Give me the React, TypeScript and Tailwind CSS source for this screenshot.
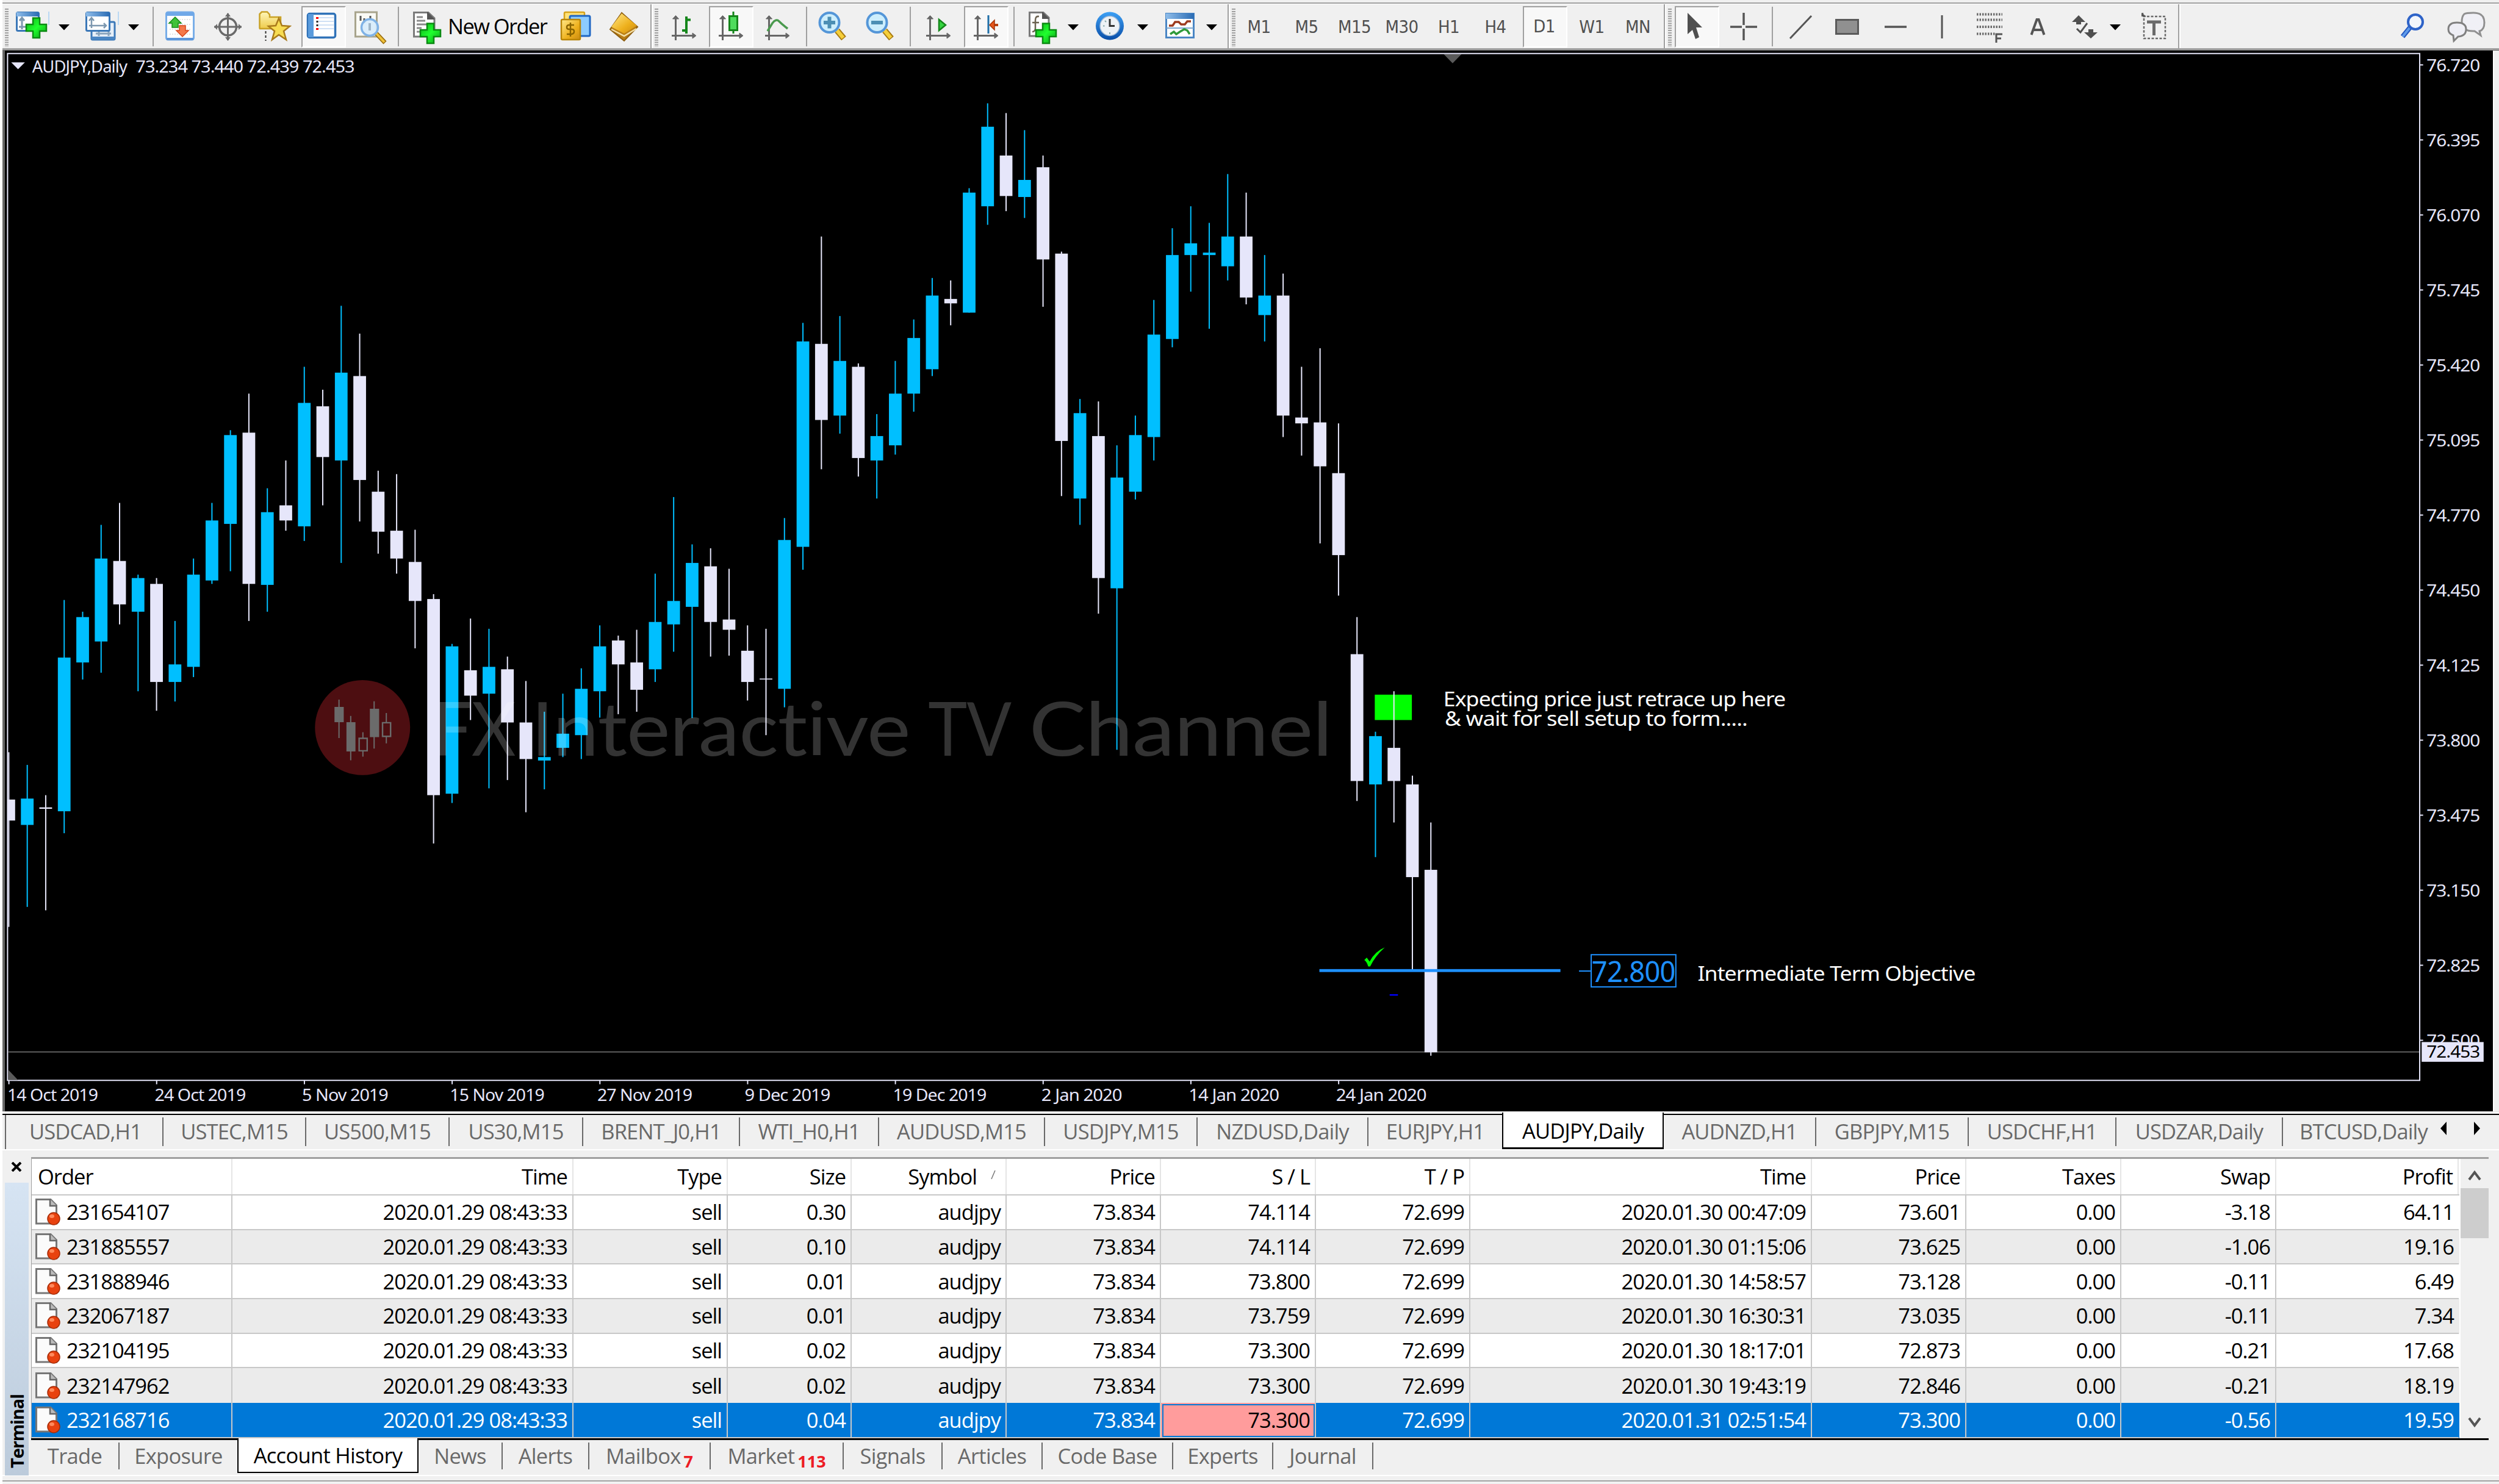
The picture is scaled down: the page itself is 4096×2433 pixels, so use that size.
import React, { ReactNode } from 'react';

/* ---------- data ---------- */

// [direction, high, body top, body bottom, low] in chart units
type Candle = [string, number, number, number, number];

const CANDLES: Candle[] = [
  ['d', 1542, 1639, 1682, 1900], ['u', 1568, 1637, 1691, 1859], ['d', 1630, 1655, 1658, 1866],
  ['u', 1230, 1348, 1663, 1708], ['u', 1254, 1265, 1358, 1393], ['u', 1076, 1145, 1315, 1379],
  ['d', 1031, 1150, 1239, 1280], ['u', 1178, 1185, 1254, 1417], ['d', 1185, 1197, 1398, 1457],
  ['u', 1273, 1362, 1398, 1438], ['u', 1145, 1178, 1367, 1388], ['u', 1031, 1067, 1190, 1197],
  ['u', 882, 892, 1074, 1171], ['d', 807, 887, 1197, 1273], ['u', 1001, 1050, 1199, 1254],
  ['d', 944, 1036, 1067, 1088], ['u', 752, 826, 1079, 1109], ['d', 799, 833, 937, 1036],
  ['u', 627, 764, 944, 1154], ['d', 684, 771, 984, 1069], ['d', 965, 1008, 1090, 1135],
  ['d', 972, 1088, 1145, 1176], ['d', 1086, 1152, 1232, 1329], ['d', 1218, 1228, 1630, 1729],
  ['u', 1320, 1325, 1627, 1646], ['d', 1268, 1374, 1426, 1476], ['u', 1289, 1367, 1422, 1616],
  ['d', 1346, 1372, 1481, 1599], ['d', 1396, 1481, 1556, 1665], ['u', 1459, 1552, 1559, 1618],
  ['u', 1422, 1504, 1533, 1552], ['u', 1370, 1412, 1507, 1556], ['u', 1282, 1325, 1417, 1471],
  ['d', 1303, 1313, 1362, 1464], ['d', 1291, 1358, 1414, 1459], ['u', 1176, 1275, 1372, 1398],
  ['u', 1019, 1232, 1280, 1336], ['u', 1116, 1154, 1244, 1472], ['d', 1124, 1161, 1275, 1346],
  ['d', 1166, 1270, 1291, 1344], ['d', 1282, 1334, 1398, 1436], ['d', 1289, 1391, 1393, 1507],
  ['u', 1062, 1107, 1412, 1450], ['u', 662, 700, 1121, 1168], ['d', 485, 705, 861, 962],
  ['u', 648, 740, 852, 889], ['d', 745, 752, 939, 977], ['u', 849, 894, 944, 1022],
  ['u', 740, 807, 913, 932], ['u', 655, 693, 807, 844], ['u', 570, 606, 757, 771],
  ['d', 575, 613, 622, 667], ['u', 386, 395, 641, 641], ['u', 212, 260, 423, 461],
  ['d', 232, 319, 402, 433], ['u', 267, 369, 404, 447], ['d', 319, 343, 532, 629],
  ['d', 516, 520, 904, 1017], ['u', 818, 847, 1022, 1076], ['d', 823, 894, 1185, 1258],
  ['u', 913, 979, 1206, 1537], ['u', 852, 892, 1008, 1024], ['u', 615, 686, 896, 944],
  ['u', 468, 523, 695, 712], ['u', 423, 499, 523, 598], ['u', 457, 518, 523, 674],
  ['u', 357, 485, 546, 575], ['d', 395, 485, 610, 624], ['u', 523, 606, 646, 700],
  ['d', 561, 606, 852, 896], ['d', 752, 856, 868, 934], ['d', 714, 866, 956, 1114],
  ['d', 868, 970, 1138, 1221], ['d', 1265, 1341, 1601, 1642], ['u', 1500, 1509, 1608, 1757],
  ['d', 1417, 1533, 1601, 1686], ['d', 1590, 1608, 1798, 1987], ['d', 1686, 1783, 2157, 2164],
];

const DATES: [string, number, number][] = [
  ['14 Oct 2019', 15, 185], ['24 Oct 2019', 317, 186], ['5 Nov 2019', 619, 176],
  ['15 Nov 2019', 922, 193], ['27 Nov 2019', 1224, 194], ['9 Dec 2019', 1526, 175],
  ['19 Dec 2019', 1830, 191], ['2 Jan 2020', 2134, 165], ['14 Jan 2020', 2436, 185],
  ['24 Jan 2020', 2738, 185],
];

const PRICES = [
  '76.720', '76.395', '76.070', '75.745', '75.420', '75.095', '74.770',
  '74.450', '74.125', '73.800', '73.475', '73.150', '72.825', '72.500',
];

const CHART_TABS: { label: string; w: string; active?: boolean; sep?: boolean }[] = [
  { label: 'USDCAD,H1', w: 'w-[254px]', sep: true },
  { label: 'USTEC,M15', w: 'w-[234px]', sep: true },
  { label: 'US500,M15', w: 'w-[235px]', sep: true },
  { label: 'US30,M15', w: 'w-[219px]', sep: true },
  { label: 'BRENT_J0,H1', w: 'w-[257px]', sep: true },
  { label: 'WTI_H0,H1', w: 'w-[228px]', sep: true },
  { label: 'AUDUSD,M15', w: 'w-[272px]', sep: true },
  { label: 'USDJPY,M15', w: 'w-[250px]', sep: true },
  { label: 'NZDUSD,Daily', w: 'w-[280px]', sep: true },
  { label: 'EURJPY,H1', w: 'w-[219px]' },
  { label: 'AUDJPY,Daily', w: 'w-[265px]', active: true },
  { label: 'AUDNZD,H1', w: 'w-[250px]', sep: true },
  { label: 'GBPJPY,M15', w: 'w-[250px]', sep: true },
  { label: 'USDCHF,H1', w: 'w-[242px]', sep: true },
  { label: 'USDZAR,Daily', w: 'w-[273px]', sep: true },
  { label: 'BTCUSD,Daily', w: 'w-[264px]' },
];

const TERMINAL_TABS: { label: string; w: string; active?: boolean; sep?: boolean; badge?: string }[] = [
  { label: 'Trade', w: 'w-[145px]', sep: true },
  { label: 'Exposure', w: 'w-[193px]' },
  { label: 'Account History', w: 'w-[297px]', active: true },
  { label: 'News', w: 'w-[138px]', sep: true },
  { label: 'Alerts', w: 'w-[142px]', sep: true },
  { label: 'Mailbox', w: 'w-[199px]', sep: true, badge: '7' },
  { label: 'Market', w: 'w-[218px]', sep: true, badge: '113' },
  { label: 'Signals', w: 'w-[162px]', sep: true },
  { label: 'Articles', w: 'w-[164px]', sep: true },
  { label: 'Code Base', w: 'w-[214px]', sep: true },
  { label: 'Experts', w: 'w-[164px]', sep: true },
  { label: 'Journal', w: 'w-[164px]', sep: true },
];

const HEADERS = ['Order', 'Time', 'Type', 'Size', 'Symbol', 'Price', 'S / L', 'T / P', 'Time', 'Price', 'Taxes', 'Swap', 'Profit'];

const order = (id: string, size: string, sl: string, time: string, price: string, swap: string, profit: string) => [
  id, '2020.01.29 08:43:33', 'sell', size, 'audjpy', '73.834', sl, '72.699', time, price, '0.00', swap, profit,
];

const ROWS = [
  order('231654107', '0.30', '74.114', '2020.01.30 00:47:09', '73.601', '-3.18', '64.11'),
  order('231885557', '0.10', '74.114', '2020.01.30 01:15:06', '73.625', '-1.06', '19.16'),
  order('231888946', '0.01', '73.800', '2020.01.30 14:58:57', '73.128', '-0.11', '6.49'),
  order('232067187', '0.01', '73.759', '2020.01.30 16:30:31', '73.035', '-0.11', '7.34'),
  order('232104195', '0.02', '73.300', '2020.01.30 18:17:01', '72.873', '-0.21', '17.68'),
  order('232147962', '0.02', '73.300', '2020.01.30 19:43:19', '72.846', '-0.21', '18.19'),
  order('232168716', '0.04', '73.300', '2020.01.31 02:51:54', '73.300', '-0.56', '19.59'),
];

const GRID = 'grid grid-cols-[329px_559px_253px_203px_254px_253px_254px_253px_560px_253px_254px_254px_299px]';

/* ---------- toolbar ---------- */

function Icon({ w, className = '', children }: { w: number; className?: string; children: ReactNode }) {
  return (
    <svg width={w} height={56} viewBox={`0 0 ${w} 56`} className={`shrink-0 overflow-visible ${className}`}>
      {children}
    </svg>
  );
}

function Sep({ className = '' }: { className?: string }) {
  return <div className={`w-[2px] h-[65px] -mt-[7px] shrink-0 bg-[#a0a0a0] ${className}`} />;
}

function BarEnd({ className = '' }: { className?: string }) {
  return <div className={`w-[4px] h-[72px] -mt-[11px] shrink-0 bg-white border-l-2 border-[#a0a0a0] ${className}`} />;
}

function Grip({ className = '' }: { className?: string }) {
  return (
    <svg width={6} height={63} viewBox="0 0 6 63" className={`shrink-0 -mt-[4px] ${className}`}>
      <path d="M3 0V63" stroke="#a0a0a0" strokeWidth="6" strokeDasharray="2 1.9" />
    </svg>
  );
}

function Caret({ className = '' }: { className?: string }) {
  return (
    <Icon w={18} className={className}>
      <path d="M0 22H18L9 31.5Z" fill="#000" />
    </Icon>
  );
}

function Pressed({ className = '', children }: { className?: string; children: ReactNode }) {
  return (
    <div className={`w-[73px] h-[68px] -mt-[8px] pt-[6px] shrink-0 flex items-start bg-[#f8f8f8] border-2 border-t-[#a0a0a0] border-l-[#a0a0a0] border-b-white border-r-white ${className}`}>
      {children}
    </div>
  );
}

function Axes() {
  return (
    <g stroke="#666" strokeWidth="3" fill="#666">
      <path d="M6.5 9V48M0 40.5H38" />
      <path d="M1.5 13L6.5 7.5L11.5 13ZM34 36L40 40.5L34 45Z" strokeWidth="1" />
    </g>
  );
}

function Plus({ x, y }: { x: number; y: number }) {
  return (
    <path
      transform={`translate(${x} ${y})`}
      d="M12 1.5H23V12H34V23H23V34H12V23H1V12H12Z"
      fill="url(#green)"
      stroke="#0b8a12"
      strokeWidth="2.5"
    />
  );
}

function Timeframe({ label, className }: { label: string; className: string }) {
  return (
    <div className={`h-[52px] shrink-0 flex items-center justify-center text-[29px] text-[#505050] font-['DejaVu_Sans_Condensed','DejaVu_Sans',sans-serif] [font-stretch:condensed] tracking-[-0.5px] ${className}`}>
      {label}
    </div>
  );
}

function Magnifier({ minus }: { minus?: boolean }) {
  return (
    <>
      <path d="M31 32L42 45" stroke="#a87b12" strokeWidth="10" />
      <path d="M31 32L41 44" stroke="#f6cf3a" strokeWidth="6" />
      <circle cx="18.5" cy="19" r="16" fill="#cdeefc" stroke="#5496d8" strokeWidth="4" />
      <path d={minus ? 'M9 19H28' : 'M9 19H28M18.5 9.5V28.5'} stroke="#4c8fb4" strokeWidth="6" />
    </>
  );
}

function Toolbar() {
  return (
    <div className="h-[72px] flex items-start pt-[11px] bg-[#f0f0f0]">
      <Grip className="ml-[4px]" />
      <Icon w={55} className="ml-[12px]">
        <rect x="1.5" y="2.5" width="36" height="30" rx="2" fill="#fff" stroke="#3b78b8" strokeWidth="3" />
        <path d="M1 2H38V9H1Z" fill="url(#blueHead)" />
        <path d="M10 12V30M6 16L10 11L14 16M5 26H18" stroke="#7d98b0" strokeWidth="3" fill="none" />
        <path d="M54 1V23" stroke="#a9d0f5" strokeWidth="1.5" />
        <Plus x={16} y={10} />
      </Icon>
      <Caret className="ml-[15px]" />
      <Icon w={55} className="ml-[26px]">
        <rect x="10" y="18" width="38" height="29" rx="2" fill="#e6eff8" stroke="#3b78b8" strokeWidth="3" />
        <path d="M10 42H48V47H10Z" fill="#4a86c4" />
        <path d="M17 37H42M22 32V41M38 32V41" stroke="#8aa5bd" strokeWidth="3" />
        <rect x="1.5" y="2.5" width="38" height="30" rx="2" fill="#fff" stroke="#3b78b8" strokeWidth="3" />
        <path d="M1 2H40V9H1Z" fill="url(#blueHead)" />
        <path d="M10 12V28M6 24H34M6 16L10 11L14 16M30 20L34 24L30 28" stroke="#7d98b0" strokeWidth="2.5" fill="none" />
        <path d="M54 1V23" stroke="#a9d0f5" strokeWidth="1.5" />
      </Icon>
      <Caret className="ml-[15px]" />
      <Sep className="ml-[22px]" />
      <Icon w={48} className="ml-[19px]">
        <rect x="1.5" y="2" width="45" height="45" rx="3" fill="#fff" stroke="#79aee8" strokeWidth="3" />
        <path d="M1 2H47V8H1Z" fill="#6fa8e8" />
        <path d="M2 46H46" stroke="#5d96da" strokeWidth="4" />
        <path d="M7 14H42M7 22H42M7 30H42M7 38H42" stroke="#dcdcdc" strokeWidth="1.5" strokeDasharray="2 2" />
        <path d="M16 10L26 20H21V27H11V20H6Z" fill="#3fc23a" stroke="#158a18" strokeWidth="1.5" />
        <path d="M28 42L38 32H33V24H23V32H18Z" fill="#f5794a" stroke="#d6461b" strokeWidth="1.5" />
      </Icon>
      <Icon w={45} className="ml-[32px]">
        <circle cx="22.5" cy="26" r="14" fill="none" stroke="#6a6a6a" strokeWidth="3.5" />
        <path d="M22.5 4V48M0 26H45" stroke="#6a6a6a" strokeWidth="3" />
        <path d="M18 9L22.5 3L27 9ZM18 43L22.5 49L27 43ZM5 21L0 26L5 31ZM40 21L45 26L40 31Z" fill="#6a6a6a" />
      </Icon>
      <Icon w={53} className="ml-[28px]">
        <path d="M1.5 28V5L5 1.5H14L18 6V10H36V29H2Z" fill="url(#yellow)" stroke="#c9a227" strokeWidth="2.5" />
        <path d="M11.5 33V49" stroke="#333" strokeWidth="2" strokeDasharray="4 3" />
        <path d="M33 12L38 24L51 25L41 33L45 47L33 39L22 47L26 33L16 25L28 24Z" fill="#f7dc52" stroke="#a97a1b" strokeWidth="2.5" />
      </Icon>
      <Pressed className="ml-[17px]">
        <Icon w={48} className="ml-[7px]">
          <rect x="1.5" y="4.5" width="45" height="39" rx="3" fill="#fff" stroke="#2f72b8" strokeWidth="3.5" />
          <path d="M2 5H11V43H2Z" fill="#5a9bdc" />
          <path d="M19 11H44M19 17H44M19 23H44M19 29H44" stroke="#cfe0f5" strokeWidth="2" />
          <path d="M17 10V13M17 28V31" stroke="#f00" strokeWidth="4" />
          <path d="M17 16V19M17 22V25" stroke="#222" strokeWidth="3" />
        </Icon>
      </Pressed>
      <Icon w={53} className="ml-[14px]">
        <rect x="1.5" y="2" width="35" height="40" fill="#fafaf5" stroke="#a8a48c" strokeWidth="3" />
        <path d="M10 8V16M16 12V20M26 8V15" stroke="#555" strokeWidth="3" />
        <path d="M36 37L50 52" stroke="#9a6e10" strokeWidth="7" />
        <path d="M36 37L49 51" stroke="#f0c23a" strokeWidth="4" />
        <circle cx="25" cy="27" r="13.5" fill="#d3eafb" fillOpacity=".85" stroke="#7fb2e6" strokeWidth="3.5" />
        <path d="M25 20V32" stroke="#9fb6c9" strokeWidth="4" />
      </Icon>
      <Sep className="ml-[18px]" />
      <Icon w={46} className="ml-[23px]">
        <path d="M1.5 2.5H25L35 12V42H1.5Z" fill="#fff" stroke="#7a7a7a" strokeWidth="3" />
        <path d="M24 2V13H35" fill="#555" stroke="#555" strokeWidth="2" />
        <path d="M6 10H16M6 16H20M6 22H22M6 28H14M6 34H12" stroke="#8a8a8a" strokeWidth="3" />
        <Plus x={11} y={19} />
      </Icon>
      <div className="ml-[11px] w-[166px] h-[50px] shrink-0 flex items-center whitespace-nowrap text-[34.5px] tracking-[-1.6px] text-black">New Order</div>
      <Icon w={53} className="ml-[19px]">
        <rect x="6" y="2" width="33" height="34" rx="2" fill="#ffe27a" stroke="#d6a21b" strokeWidth="2.5" />
        <rect x="15" y="8" width="33" height="33" rx="2" fill="#8ccbff" stroke="#1f66c4" strokeWidth="3" />
        <rect x="1" y="14" width="31" height="33" rx="2" fill="url(#gold)" stroke="#b98508" strokeWidth="2.5" />
        <path d="M22 23H14Q10 23 10 26.5T14 30H18Q22 30 22 33.5T18 38H10M16 19V42" fill="none" stroke="#8a6400" strokeWidth="2.5" />
      </Icon>
      <Icon w={47} className="ml-[27px]">
        <path d="M20 3L46 26L24 49L1 30Z" fill="#b87d14" stroke="#8f5f10" strokeWidth="2" />
        <path d="M20 4L45 24L24 37L3 26Z" fill="url(#gold)" />
        <path d="M3 30L24 41L44 29" stroke="#f3dfa6" strokeWidth="2.5" fill="none" />
      </Icon>
      <BarEnd className="ml-[20px]" />
      <Grip className="ml-[3px]" />
      <Icon w={41} className="ml-[22px]">
        <Axes />
        <path d="M24 9V37M24 14.5H31M17 32H24" stroke="#15861b" strokeWidth="4" />
      </Icon>
      <Pressed className="ml-[20px]">
        <Icon w={41} className="ml-[14px]">
          <Axes />
          <path d="M24 1V37" stroke="#15861b" strokeWidth="3" />
          <rect x="17.5" y="8.5" width="13" height="23" fill="#4fdc5c" stroke="#15861b" strokeWidth="3" />
        </Icon>
      </Pressed>
      <Icon w={42} className="ml-[19px]">
        <Axes />
        <path d="M4 33L12 20Q18 12 23 17T37 29" stroke="#4a9a4e" strokeWidth="3.5" fill="none" />
      </Icon>
      <Sep className="ml-[25px]" />
      <Icon w={47} className="ml-[18px]"><Magnifier /></Icon>
      <Icon w={47} className="ml-[31px]"><Magnifier minus /></Icon>
      <Sep className="ml-[25px]" />
      <Icon w={41} className="ml-[25px]">
        <Axes />
        <path d="M21 14L32 23L21 32Z" fill="#35d540" stroke="#15861b" strokeWidth="2.5" />
      </Icon>
      <Pressed className="ml-[21px]">
        <Icon w={41} className="ml-[14px]">
          <Axes />
          <path d="M24 7V37" stroke="#1f6fa8" strokeWidth="3" />
          <path d="M40 23H30" stroke="#b6400f" strokeWidth="4" />
          <path d="M26 23L34 15V31Z" fill="#e8571b" stroke="#a5360b" strokeWidth="1.5" />
        </Icon>
      </Pressed>
      <Sep className="ml-[8px]" />
      <Icon w={46} className="ml-[23px]">
        <path d="M1.5 2.5H24L33 11V41H1.5Z" fill="#fff" stroke="#7a7a7a" strokeWidth="3" />
        <path d="M23 2V12H33" fill="#555" stroke="#555" strokeWidth="2" />
        <path d="M17 9Q11 8 11 15V28Q11 34 6 34M6 19H17" stroke="#6b6250" strokeWidth="2.5" fill="none" />
        <Plus x={11} y={19} />
      </Icon>
      <Caret className="ml-[18px]" />
      <Icon w={46} className="ml-[28px]">
        <circle cx="23" cy="24.5" r="23" fill="url(#clock)" />
        <circle cx="23" cy="24.5" r="16" fill="#eef2f6" stroke="#9db7d4" strokeWidth="1.5" />
        <path d="M23 13V24.5H31" stroke="#333" strokeWidth="3" fill="none" />
        <path d="M23 35V38M12 24.5H14.5M15 16L17 18" stroke="#8aa" strokeWidth="2" />
      </Icon>
      <Caret className="ml-[22px]" />
      <Icon w={48} className="ml-[28px]">
        <rect x="1.5" y="4.5" width="45" height="39" fill="#fff" stroke="#4a86c4" strokeWidth="3" />
        <path d="M1 4H47V13H1Z" fill="url(#blueHead)" />
        <path d="M2 28H46" stroke="#7fa8cf" strokeWidth="2" />
        <path d="M6 24H12L16 18H22L26 22H32L36 17H42" stroke="#9c3a1e" strokeWidth="3.5" fill="none" />
        <path d="M8 38L14 34L18 38L24 34L31 30L36 32L40 38" stroke="#2f9a3a" strokeWidth="3.5" fill="none" />
      </Icon>
      <Caret className="ml-[19px]" />
      <BarEnd className="ml-[17px]" />
      <Grip className="ml-[3px]" />
      <Timeframe label="M1" className="w-[77px]" />
      <Timeframe label="M5" className="w-[79px]" />
      <Timeframe label="M15" className="w-[78px]" />
      <Timeframe label="M30" className="w-[77px]" />
      <Timeframe label="H1" className="w-[77px]" />
      <Timeframe label="H4" className="w-[76px]" />
      <Pressed className="ml-[7px]">
        <Timeframe label="D1" className="w-[66px] -mt-[1px]" />
      </Pressed>
      <Timeframe label="W1" className="ml-[3px] w-[74px]" />
      <Timeframe label="MN" className="w-[77px]" />
      <BarEnd className="ml-[4px]" />
      <Grip className="ml-[3px]" />
      <Pressed className="ml-[5px]">
        <Icon w={26} className="ml-[18px]">
          <path d="M1 3L25 27H15L20 43L14 46L9 31L1 38Z" fill="#4f4f4f" />
        </Icon>
      </Pressed>
      <Icon w={44} className="ml-[18px]">
        <path d="M0 26H19M25 26H44M22 3V23M22 29V48" stroke="#555" strokeWidth="3.5" />
      </Icon>
      <Sep className="ml-[24px]" />
      <Icon w={39} className="ml-[26px]">
        <path d="M2 45L37 8" stroke="#555" strokeWidth="3" />
      </Icon>
      <Icon w={39} className="ml-[37px]">
        <rect x="1.5" y="14.5" width="36" height="23" fill="#909090" stroke="#5a5a5a" strokeWidth="3" />
      </Icon>
      <Icon w={36} className="ml-[42px]">
        <path d="M0 26H36" stroke="#555" strokeWidth="3.5" />
      </Icon>
      <Icon w={4} className="ml-[56px]">
        <path d="M2 7V45" stroke="#555" strokeWidth="3" />
      </Icon>
      <Icon w={42} className="ml-[55px]">
        <path d="M0 5.5H42M0 14.5H42M0 26H42M0 37.5H30" stroke="#6a6a6a" strokeWidth="4" strokeDasharray="2.5 2" />
        <path d="M32 52V38H42M32 45H40" stroke="#555" strokeWidth="3" fill="none" />
      </Icon>
      <Icon w={24} className="ml-[46px]">
        <path d="M1.5 39L10.5 14H13.5L22.5 39M6 31H18" stroke="#555" strokeWidth="4" fill="none" />
      </Icon>
      <Icon w={43} className="ml-[44px]">
        <path d="M11 7L22 18H15V22H7V18H0Z" fill="#4f4f4f" />
        <path d="M31 45L42 35H35V30H27V35H20Z" fill="#4f4f4f" />
        <path d="M8 29L14 35L25 20" stroke="#4f4f4f" strokeWidth="3" fill="none" />
      </Icon>
      <Caret className="ml-[19px]" />
      <Icon w={40} className="ml-[34px]">
        <path d="M2 3V9H39V45H4V9" stroke="#6a6a6a" strokeWidth="2.5" strokeDasharray="4 2.5" fill="none" />
        <path d="M0 3L8 9H0Z" fill="#555" />
        <path d="M9 18H32M20.5 18V40" stroke="#6a6a6a" strokeWidth="5" />
      </Icon>
      <BarEnd className="ml-[20px]" />
      <Icon w={40} className="ml-[360px]">
        <path d="M4 42L17 26" stroke="#2257c0" strokeWidth="8" />
        <path d="M4 42L16 27" stroke="#5f9bea" strokeWidth="4" />
        <circle cx="25" cy="18" r="12" fill="#f3f6fb" stroke="#2e63c8" strokeWidth="4" />
      </Icon>
      <Icon w={62} className="ml-[38px]">
        <path d="M27 5Q30 3 42 3Q60 3 60 19Q60 31 52 33L54 40L44 33Q23 34 23 18Q23 9 27 5Z" fill="#f0f0f6" stroke="#909090" strokeWidth="3" />
        <path d="M15 19Q30 19 30 30Q30 41 17 42L10 49L9 40Q1 37 1 30Q1 19 15 19Z" fill="#eeeef5" stroke="#808080" strokeWidth="3" />
      </Icon>
      <svg width={0} height={0}>
        <defs>
          <linearGradient id="green" x1="0" y1="0" x2="1" y2="1">
            <stop offset="0" stopColor="#0fae1a" />
            <stop offset=".5" stopColor="#1fff2e" />
            <stop offset="1" stopColor="#0c9a16" />
          </linearGradient>
          <linearGradient id="blueHead" x1="0" y1="0" x2="1" y2="0">
            <stop offset="0" stopColor="#8fbdea" />
            <stop offset="1" stopColor="#2b6cb4" />
          </linearGradient>
          <linearGradient id="yellow" x1="0" y1="0" x2="0" y2="1">
            <stop offset="0" stopColor="#fff6b8" />
            <stop offset="1" stopColor="#eecb4b" />
          </linearGradient>
          <linearGradient id="gold" x1="0" y1="0" x2="1" y2="1">
            <stop offset="0" stopColor="#ffe98a" />
            <stop offset=".6" stopColor="#eeb01c" />
            <stop offset="1" stopColor="#c98a12" />
          </linearGradient>
          <linearGradient id="clock" x1="0" y1="0" x2="0" y2="1">
            <stop offset="0" stopColor="#3da0f5" />
            <stop offset="1" stopColor="#0a4ea8" />
          </linearGradient>
        </defs>
      </svg>
    </div>
  );
}

/* ---------- chart ---------- */

interface LabelProps {
  x: number;
  y: number;
  w: number;
  size?: number;
  fill?: string;
  font?: string;
  children: string;
}

function Label({ x, y, w, size = 33, fill = '#e6e6fa', font = '"Noto Sans", "Open Sans", sans-serif', children }: LabelProps) {
  return (
    <text x={x} y={y} textLength={w} lengthAdjust="spacingAndGlyphs" fontSize={size} fill={fill} fontFamily={font}>
      {children}
    </text>
  );
}

function Watermark() {
  const font = 'Lato, sans-serif';
  return (
    <g>
      <circle cx="743" cy="1491.5" r="97.5" fill="#4d0e11" />
      <g fill="#6b6b6b">
        <path d="M685.5 1449h19v31.5h-19zM710 1480.5h18.5v60H710zM758 1453h19v58h-19z" />
        <path d="M693.5 1434h2.5v79h-2.5zM717.5 1467.5h2.5v91h-2.5zM765.5 1437.5h2.5v97h-2.5z" />
        <path d="M742.5 1501h2.5v12h-2.5zM742.5 1540h2.5v11h-2.5zM790.5 1461.5h2.5v19h-2.5zM790.5 1510h2.5v14h-2.5z" />
      </g>
      <path d="M736 1513.5h16.5v25.5H736zM784 1481.5h16.5v28H784z" fill="none" stroke="#6b6b6b" strokeWidth="3" />
      <g opacity=".2">
        <Label x={888} y={1549} w={168} size={154} fill="#fff" font={font}>FX</Label>
        <Label x={1088} y={1549} w={777} size={154} fill="#fff" font={font}>Interactive</Label>
        <Label x={1902} y={1549} w={170} size={154} fill="#fff" font={font}>TV</Label>
        <Label x={2109} y={1549} w={621} size={154} fill="#fff" font={font}>Channel</Label>
      </g>
    </g>
  );
}

function Chart() {
  return (
    <svg width={4078} height={1739} viewBox="10 104 5099 2174" preserveAspectRatio="none" className="block shrink-0 bg-black">
      {/* current bid */}
      <rect x="17" y="2155" width="4942" height="2.5" fill="#5f5f5f" />
      <rect x="2817.5" y="1424" width="76" height="52" fill="#00ff00" />
      {CANDLES.map(([dir, high, top, bottom, low], i) => {
        const x = 18 + i * 37.85;
        const left = Math.max(x - 13, 16);
        return (
          <g key={i} fill={dir === 'u' ? '#00bfff' : '#e6e6fa'}>
            <rect x={x - 1.25} y={high} width={2.5} height={low - high} />
            <rect x={left} y={top} width={x + 13 - left} height={bottom - top} />
          </g>
        );
      })}
      <Watermark />

      {/* frame, scales */}
      <path d="M15.5 110H4959V2214.5H15.5Z" fill="none" stroke="#e6e6fa" strokeWidth="2.5" />
      <path d="M17 2193L37 2214H17Z" fill="#5a5a5a" />
      <path d="M2959 111.5H2995L2977 130Z" fill="#5a5a5a" />
      {DATES.map(([text, x, w], i) => (
        <g key={text}>
          <rect x={17 + i * 302.8} y="2214" width="2.5" height="8.5" fill="#e6e6fa" />
          <Label x={x} y={2256.5} w={w}>{text}</Label>
        </g>
      ))}
      {PRICES.map((text, i) => (
        <g key={text}>
          <rect x="4960" y={132 + i * 153.78} width="6" height="2.5" fill="#e6e6fa" />
          <Label x={4973} y={146.5 + i * 153.78} w={109}>{text}</Label>
        </g>
      ))}
      <rect x="4963" y="2136" width="127" height="40.5" fill="#e6e6fa" />
      <Label x={4973} y={2168.5} w={109} fill="#000">72.453</Label>

      <path d="M23 128H51L37 142Z" fill="#e6e6fa" />
      <Label x={66} y={148.5} w={194}>AUDJPY,Daily</Label>
      <Label x={278} y={148.5} w={448}>73.234 73.440 72.439 72.453</Label>

      {/* drawn objects */}
      <rect x="2704" y="1986.5" width="494" height="6" fill="#1e90ff" />
      <path d="M2796 1968L2801 1963L2807 1971Q2818 1950 2838 1942Q2818 1960 2808 1981H2804Q2801 1971 2796 1968Z" fill="#00ff00" />
      <rect x="2848" y="2038" width="17" height="3" fill="#0000ff" />
      <path d="M3236 1990.5H3260" stroke="#1e90ff" strokeWidth="2.5" />
      <rect x="3261" y="1957" width="173.5" height="66" fill="none" stroke="#1e90ff" strokeWidth="2.5" />
      <Label x={3262} y={2013} w={171} size={60} fill="#1e90ff">72.800</Label>
      <Label x={3479} y={2010.5} w={569} size={42} fill="#fff">Intermediate Term Objective</Label>
      <Label x={2958} y={1447.5} w={701} size={42} fill="#fff">Expecting price just retrace up here</Label>
      <Label x={2961} y={1488} w={620} size={42} fill="#fff">&amp; wait for sell setup to form.....</Label>
    </svg>
  );
}

/* ---------- bottom panels ---------- */

function ChartTabs() {
  return (
    <div className="h-[58px] flex items-start border-t-2 border-black bg-[#f0f0f0] pl-[6px]">
      <div className="w-[2px] h-[56px] shrink-0 bg-[#696969] -ml-[2px] mr-[4px]" />
      {CHART_TABS.map((tab) => (
        <div
          key={tab.label}
          className={`shrink-0 flex items-center justify-center whitespace-nowrap tracking-[-0.85px] ${tab.w} ${
            tab.active
              ? 'h-[60px] -mt-[4px] pt-[3px] bg-white text-black border-2 border-t-0 border-black border-b-[3px]'
              : 'h-[56px] pb-[2px] text-[#696969]'
          }`}
        >
          <span className="flex-1 text-center">{tab.label}</span>
          {tab.sep && <div className="w-[2px] h-[47px] bg-[#696969]" />}
        </div>
      ))}
      <svg width={65} height={24} viewBox="0 0 65 24" className="-ml-[6px] mt-[10px] shrink-0">
        <path d="M10 1V23L0 12Z" fill="#000" />
        <path d="M55 1V23L65 12Z" fill="#000" />
      </svg>
    </div>
  );
}

function OrderIcon() {
  return (
    <svg width={42} height={44} viewBox="0 0 42 44" className="shrink-0">
      <path d="M1.5 1.5H25L34.5 11V41H1.5Z" fill="#fbfbfb" stroke="#777" strokeWidth="3" />
      <path d="M24 1V12H35" fill="#bbb" stroke="#666" strokeWidth="2.5" />
      <circle cx="30" cy="33" r="10" fill="#e8420f" stroke="#a52c08" strokeWidth="1.5" />
      <ellipse cx="27" cy="29" rx="4" ry="3" fill="#ff8a5c" />
    </svg>
  );
}

function OrdersTable() {
  return (
    <div className="w-[3979px] shrink-0 tracking-[-1px]">
      <div className={`${GRID} h-[60px] bg-white border-b-2 border-[#c8c8c8] text-black`}>
        {HEADERS.map((h, i) => (
          <div
            key={i}
            className={`flex items-center border-r-2 border-[#e5e5e5] ${i === 0 ? 'pl-[10px]' : 'justify-end pr-[8px]'}`}
          >
            {h}
            {h === 'Symbol' && (
              <svg width={39} height={20} viewBox="0 0 39 20" className="-mt-[6px]">
                <path d="M24 17L30 3" stroke="#777" strokeWidth="1.5" />
              </svg>
            )}
          </div>
        ))}
      </div>
      {ROWS.map((row, r) => {
        const selected = r === ROWS.length - 1;
        return (
          <div
            key={row[0]}
            className={`${GRID} ${
              selected ? 'h-[58px] bg-[#0078d7] text-white' : r % 2 ? 'h-[56.7px] bg-[#ebebeb] text-black' : 'h-[56.7px] bg-white text-black'
            }`}
          >
            {row.map((cell, c) => (
              <div
                key={c}
                className={`flex items-center border-[#c8c8c8] ${r === 5 ? '' : 'border-b-2'} ${
                  c === 0 ? 'pl-[6px] gap-[9px]' : 'justify-end pr-[8px]'
                } ${c < 12 ? 'border-r-2' : ''} ${
                  selected && c === 6 ? 'bg-[#ff9c9c] text-black outline-2 -outline-offset-4 outline-[#0078d7]' : ''
                }`}
              >
                {c === 0 && <OrderIcon />}
                {cell}
              </div>
            ))}
          </div>
        );
      })}
    </div>
  );
}

function ScrollBar() {
  return (
    <div className="w-[48px] h-[458px] bg-[#f0f0f0] border-l-2 border-white flex flex-col items-center justify-between pb-[15px]">
      <div className="w-full flex flex-col items-center">
        <svg width={22} height={22} viewBox="0 0 22 22" className="mt-[16px]">
          <path d="M2 18L11 6L20 18" stroke="#555" strokeWidth="4" fill="none" />
        </svg>
        <div className="mt-[10px] w-full h-[82px] bg-[#cdcdcd]" />
      </div>
      <svg width={22} height={22} viewBox="0 0 22 22">
        <path d="M2 4L11 16L20 4" stroke="#555" strokeWidth="4" fill="none" />
      </svg>
    </div>
  );
}

function TerminalTabs() {
  return (
    <div className="h-[60px] flex items-start bg-[#f0f0f0] border-t-[3px] border-black">
      {TERMINAL_TABS.map((tab) => (
        <div
          key={tab.label}
          className={`shrink-0 flex items-center justify-center whitespace-nowrap tracking-[-0.7px] ${tab.w} ${
            tab.active
              ? 'h-[57px] -mt-[3px] bg-white text-black border-2 border-t-0 border-black'
              : 'h-[54px] pb-[2px] text-[#696969]'
          }`}
        >
          <span className="flex-1 flex justify-center">
            {tab.label}
            {tab.badge && (
              <span className="ml-[5px] mt-[13px] -mb-[13px] text-[27px] leading-[40px] font-bold tracking-normal text-[#ed1c24]">{tab.badge}</span>
            )}
          </span>
          {tab.sep && <div className="w-[2px] h-[44px] bg-[#696969]" />}
        </div>
      ))}
    </div>
  );
}

function Terminal() {
  return (
    <div className="flex h-[535px]">
      <div className="w-[47px] shrink-0 flex flex-col">
        <svg width={18} height={16} viewBox="0 0 18 16" className="mt-[19px] ml-[14px]">
          <path d="M2 1L16 15M16 1L2 15" stroke="#000" strokeWidth="4" />
        </svg>
        <div className="mt-[18px] ml-[4px] w-[39px] h-[480px] bg-gradient-to-b from-[#d6e4f3] to-[#bccbdb] flex items-end justify-center pb-[12px]">
          <span className="[writing-mode:vertical-rl] rotate-180 text-[29px] leading-[39px] font-bold tracking-[-1.1px] text-black">Terminal</span>
        </div>
      </div>
      <div className="w-[4028px] shrink-0 pt-[11px]">
        <div className="flex items-start border-t-[3px] border-l-[1px] border-[#a0a0a0]">
          <OrdersTable />
          <ScrollBar />
        </div>
        <TerminalTabs />
      </div>
    </div>
  );
}

export default function App() {
  return (
    <div className="w-[4096px] h-[2433px] overflow-hidden bg-[#f0f0f0] border-l-4 border-white font-['Open_Sans','Noto_Sans',sans-serif] text-[34.5px] leading-[48px] tracking-[-1.1px]">
      <div className="h-[7px] border-b border-white">
        <div className="h-[6px] border-b-2 border-[#a0a0a0]" />
      </div>
      <Toolbar />
      <div className="h-[3px] bg-[#a0a0a0]" />
      <div className="h-[1740px] flex border-t border-l-4 border-[#696969]">
        <Chart />
        <div className="w-[2px] bg-white" />
      </div>
      <div className="h-[4px] bg-white border-t border-[#e3e3e3]" />
      <ChartTabs />
      <div className="h-[2px] bg-white" />
      <Terminal />
      <div className="h-[2px] bg-white -mt-[3px]" />
      <div className="h-[7px] bg-[#f0f0f0]" />
      <div className="h-[2px] bg-[#a0a0a0]" />
      <div className="h-[1px] bg-white" />
    </div>
  );
}
